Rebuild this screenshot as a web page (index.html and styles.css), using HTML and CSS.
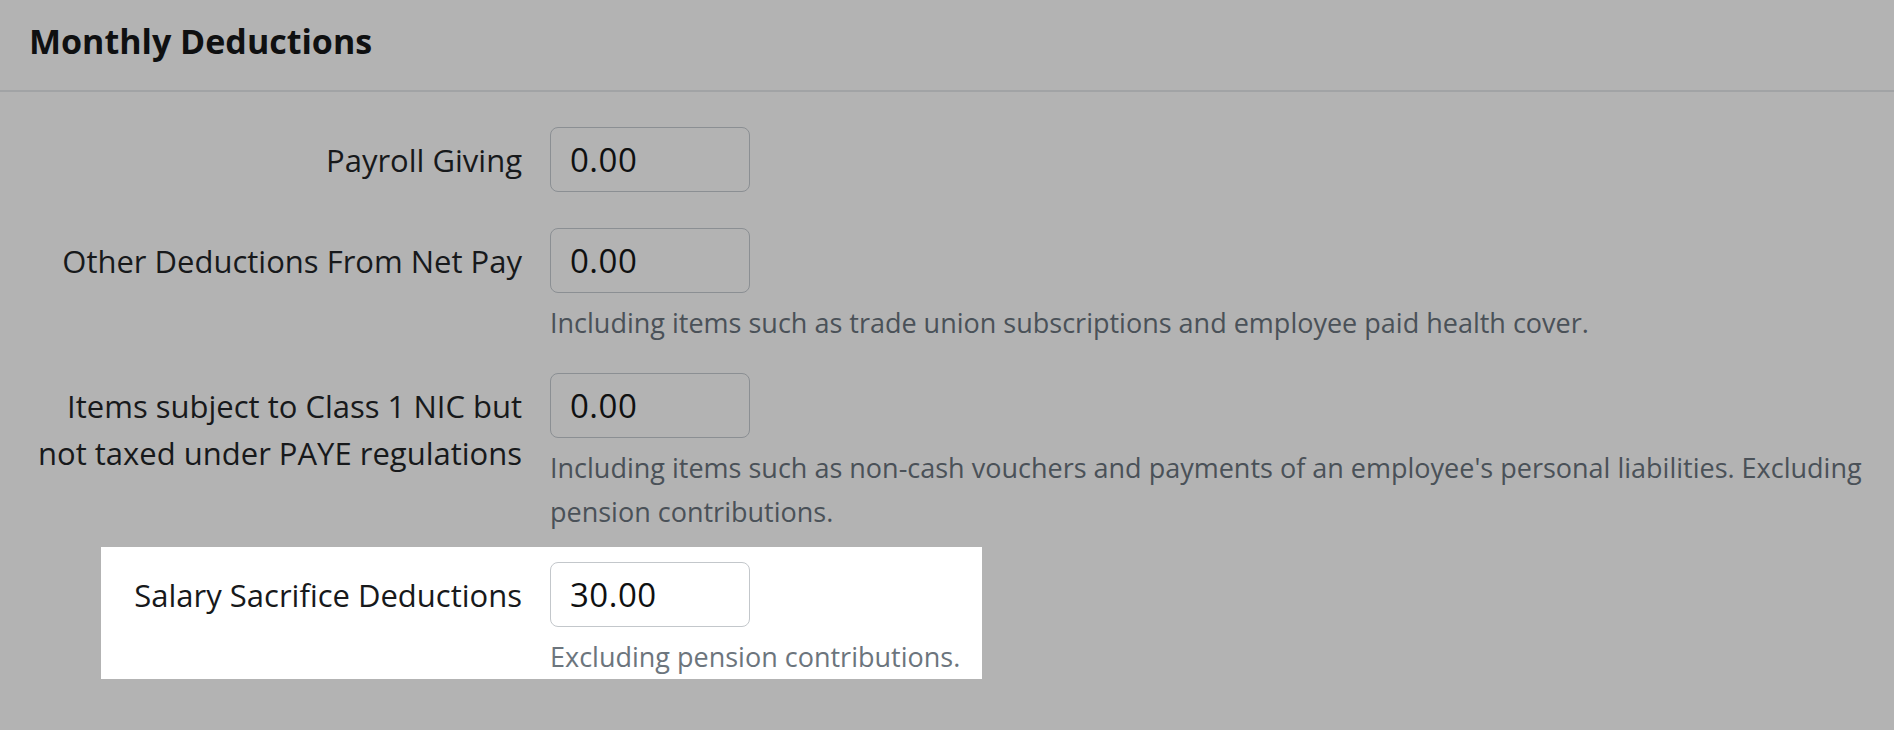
FILE: index.html
```html
<!DOCTYPE html>
<html lang="en">
<head>
    <meta charset="UTF-8">
    <meta name="viewport" content="width=device-width, initial-scale=1.0">
    <title>Monthly Deductions</title>
    <link rel="stylesheet" href="styles.css">
</head>
<body>
    <div class="card">
        <div class="card-header">
            <h2>Monthly Deductions</h2>
        </div>

        <div class="card-body">
            <div class="row">
                <label class="label" for="payrollGiving">Payroll Giving</label>
                <div class="field">
                    <input type="text" id="payrollGiving" value="0.00">
                </div>
            </div>

            <div class="row">
                <label class="label" for="otherDeductions">Other Deductions From Net Pay</label>
                <div class="field">
                    <input type="text" id="otherDeductions" value="0.00">
                    <p class="help">Including items such as trade union subscriptions and employee paid health cover.</p>
                </div>
            </div>

            <div class="row">
                <label class="label" for="class1Nic">Items subject to Class 1 NIC but not taxed under PAYE regulations</label>
                <div class="field">
                    <input type="text" id="class1Nic" value="0.00">
                    <p class="help">Including items such as non-cash vouchers and payments of an employee's personal liabilities. Excluding pension contributions.</p>
                </div>
            </div>

            <div class="row spot">
                <label class="label" for="salarySacrifice">Salary Sacrifice Deductions</label>
                <div class="field">
                    <input type="text" id="salarySacrifice" value="30.00">
                    <p class="help">Excluding pension contributions.</p>
                </div>
            </div>
        </div>
    </div>
</body>
</html>
```

FILE: styles.css
```css
body {
    font-family: "Open Sans", Arial, sans-serif;
    background-color: #b3b3b3;
    color: #17191b;
    margin: 0;
    padding: 0;
}

.card-header {
    padding: 19px 29px 27px;
    border-bottom: 2px solid #a1a3a5;
}

.card-header h2 {
    margin: 0;
    font-size: 34px;
    line-height: 44px;
    font-weight: 700;
    color: #0f1011;
}

.card-body {
    padding: 35px 20px 40px 0;
}

.row {
    display: flex;
    align-items: baseline;
    gap: 28px;
    margin-bottom: 28px;
}

.label {
    width: 522px;
    box-sizing: border-box;
    padding-left: 32px;
    flex-shrink: 0;
    text-align: right;
    font-size: 31px;
    line-height: 47px;
}

.field {
    flex: 1;
}

input {
    display: block;
    width: 200px;
    height: 65px;
    box-sizing: border-box;
    margin: 0 0 8px;
    padding: 0 19px;
    font-family: inherit;
    font-size: 33px;
    letter-spacing: 0.5px;
    color: #0f1011;
    background: transparent;
    border: 1px solid #8b8f93;
    border-radius: 8px;
}

.help {
    margin: 0;
    font-size: 27px;
    line-height: 44px;
    color: #4a5158;
}

.spot {
    width: fit-content;
    margin-left: 101px;
    margin-top: -15px;
    padding: 15px 22px 0 20px;
    background: #ffffff;
}

.spot .label {
    width: 401px;
    padding-left: 0;
}

.spot .field {
    flex: none;
}

.spot input {
    border-color: #c3c7cb;
}

.spot .help {
    color: #6c757d;
}
```
